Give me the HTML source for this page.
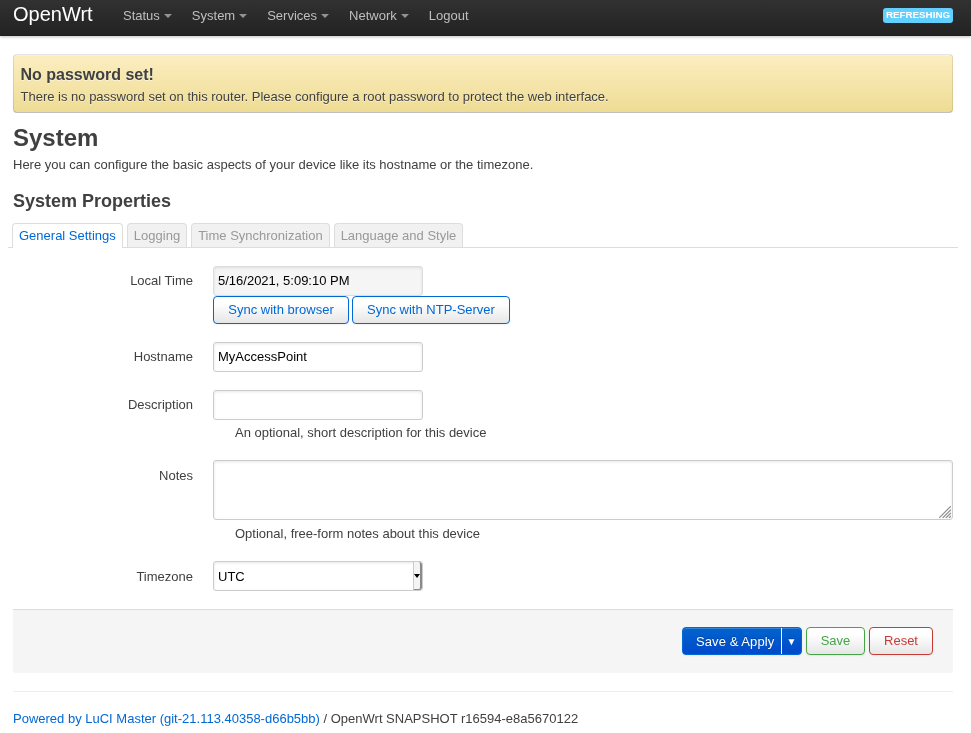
<!DOCTYPE html>
<html lang="en">
<head>
<meta charset="utf-8">
<title>OpenWrt - System - LuCI</title>
<style>
*{box-sizing:border-box}
html,body{margin:0;padding:0}
#wrap{position:absolute;left:0;top:0;width:971px;height:733px;overflow:hidden;will-change:transform}
body{width:971px;height:733px;overflow:hidden;background:#fff;font-family:"Liberation Sans",Arial,Helvetica,sans-serif;font-size:13px;line-height:18px;color:#404040;position:relative}
a{color:#0069d6;text-decoration:none}
header{position:absolute;left:0;top:-4px;width:971px;height:40px;background:#222;background-image:linear-gradient(#333,#222);box-shadow:0 1px 3px rgba(0,0,0,.25),inset 0 -1px 0 rgba(0,0,0,.1)}
header .brand{position:absolute;left:13px;top:8px;color:#fff;font-size:20px;line-height:20px;font-weight:normal}
ul.nav{list-style:none;margin:0;padding:0;position:absolute;left:113px;top:0;height:40px;display:flex}
ul.nav li a{display:block;padding:10px 10px 11px;line-height:19px;color:#bfbfbf;white-space:nowrap}
ul.nav li a.menu:after{content:"";display:inline-block;width:0;height:0;border-left:4px solid transparent;border-right:4px solid transparent;border-top:4px solid #bfbfbf;margin-left:4px;vertical-align:middle;position:relative;top:-1px;opacity:.7}
.badge{position:absolute;left:883px;top:12px;width:70px;height:15px;background:#62cffc;border-radius:3px;color:#fff;font-size:9.8px;font-weight:bold;line-height:13px;text-align:center;text-transform:uppercase;white-space:nowrap}
#main{position:absolute;left:13px;top:54px;width:940px}
.alert{height:59px;border:1px solid rgba(0,0,0,.1);border-bottom-color:rgba(0,0,0,.25);border-radius:4px;background:linear-gradient(#fceec1,#eedc94) repeat-x;background-origin:padding-box;box-shadow:inset 0 1px 0 rgba(255,255,255,.25);padding:10px 6.5px 0;text-shadow:0 1px 0 rgba(255,255,255,.5)}
.alert h4{margin:0;font-size:16px;line-height:20px;font-weight:bold;color:#404040}
.alert p{margin:3px 0 0;line-height:18px}
h2{margin:7px 0 0;font-size:24px;line-height:36px;font-weight:bold;color:#404040}
.desc{margin:0}
h3{margin:9px 0 0;font-size:18px;line-height:36px;font-weight:bold;color:#404040}
ul.tabs{list-style:none;margin:4px -5px 0;padding:0 0 0 4px;height:25px;border-bottom:1px solid #ddd;display:flex}
ul.tabs li{height:24px;margin-right:4px;padding:0 6px;border:1px solid #ddd;border-bottom:none;border-radius:4px 4px 0 0;background:#f1f1f1;line-height:23px;color:#999;white-space:nowrap}
ul.tabs li.active{background:#fff;color:#0069d6;height:25px}
.row{position:absolute;left:0;width:940px}
.row label{position:absolute;left:0;width:180px;text-align:right;line-height:18px}
.inp{position:absolute;left:200px;width:210px;height:30px;border:1px solid #ccc;border-radius:3px;background:#fff;box-shadow:inset 0 1px 3px rgba(0,0,0,.1);padding:5px 4px;font-size:13px;line-height:18px;color:#000;white-space:nowrap}
.inp.ro{background:#f5f5f5;border-color:#ddd}
.hint{position:absolute;left:222px;line-height:18px}
.btn{position:absolute;height:28px;border:1px solid #ccc;border-radius:4px;background:#fff;background-image:linear-gradient(#fff,#fff 25%,#e6e6e6);box-shadow:inset 0 1px 0 rgba(255,255,255,.2),0 1px 2px rgba(0,0,0,.05);font-size:13px;line-height:26px;text-align:center;white-space:nowrap;color:#404040}
.btn.act{border-color:#0069d6;color:#0069d6}
.btn.save{border-color:#46a546;color:#46a546}
.btn.reset{border-color:#c43c35;color:#c43c35}
.btn.apply{border-color:#0069d6;background:#0049cc;background-image:linear-gradient(#0064cd,#0049cc);color:#fff;text-shadow:0 -1px 0 rgba(0,0,0,.25)}
.actions{position:absolute;left:0;top:555px;width:940px;height:64px;background:#f5f5f5;border-top:1px solid #ddd;border-radius:0 0 3px 3px}
footer{position:absolute;left:0;top:637px;width:940px;border-top:1px solid #eee;padding-top:18px;line-height:18px}
</style>
</head>
<body><div id="wrap">
<header>
<a class="brand">OpenWrt</a>
<ul class="nav">
<li><a class="menu">Status</a></li>
<li><a class="menu">System</a></li>
<li><a class="menu">Services</a></li>
<li><a class="menu">Network</a></li>
<li><a>Logout</a></li>
</ul>
<span class="badge">REFRESHING</span>
</header>
<div id="main">
<div class="alert"><h4>No password set!</h4><p>There is no password set on this router. Please configure a root password to protect the web interface.</p></div>
<h2>System</h2>
<div class="desc">Here you can configure the basic aspects of your device like its hostname or the timezone.</div>
<h3>System Properties</h3>
<ul class="tabs">
<li class="active">General Settings</li>
<li>Logging</li>
<li>Time Synchronization</li>
<li>Language and Style</li>
</ul>

<div class="row" style="top:212px">
<label style="top:6px">Local Time</label>
<div class="inp ro" style="top:0">5/16/2021, 5:09:10 PM</div>
<div class="btn act" style="left:200px;top:30px;width:136px">Sync with browser</div>
<div class="btn act" style="left:339px;top:30px;width:158px">Sync with NTP-Server</div>
</div>
<div class="row" style="top:288px">
<label style="top:6px">Hostname</label>
<div class="inp" style="top:0">MyAccessPoint</div>
</div>
<div class="row" style="top:336px">
<label style="top:6px">Description</label>
<div class="inp" style="top:0"></div>
<div class="hint" style="top:34px">An optional, short description for this device</div>
</div>
<div class="row" style="top:406px">
<label style="top:7px">Notes</label>
<div class="inp" style="top:0;width:740px;height:60px"><svg width="12" height="12" viewBox="0 0 12 12" style="position:absolute;right:1px;bottom:1px"><path d="M0 12L12 0M3.6 12L12 3.6M6.8 12L12 6.8M10 12L12 10" stroke="#8e8e8e" stroke-width="1.2" fill="none"/></svg></div>
<div class="hint" style="top:65px">Optional, free-form notes about this device</div>
</div>
<div class="row" style="top:507px">
<label style="top:7px">Timezone</label>
<div class="inp" style="top:0;height:30px;padding-top:6px">UTC<span style="position:absolute;right:0;top:0;width:9px;height:28px;background:#f5f4f2;border-left:1px solid #ccc;border-right:2px solid #8a8a8a;border-bottom:1px solid #8a8a8a;border-radius:0 3px 3px 0"></span><span style="position:absolute;right:2px;top:12px;width:0;height:0;border-left:3px solid transparent;border-right:3px solid transparent;border-top:4px solid #000"></span></div>
</div>

<div class="actions">
<div class="btn apply" style="left:669px;top:17px;width:120px;text-align:left;padding-left:13px;line-height:28px;letter-spacing:.08px">Save &amp; Apply<i style="position:absolute;left:98px;top:0;width:1px;height:26px;background:#fff"></i><span style="position:absolute;left:98.5px;top:0;width:20px;text-align:center;font-size:10px;line-height:28px;letter-spacing:0">▼</span></div>
<div class="btn save" style="left:793px;top:17px;width:59px">Save</div>
<div class="btn reset" style="left:856px;top:17px;width:64px">Reset</div>
</div>
<footer><a>Powered by LuCI Master (git-21.113.40358-d66b5bb)</a> / OpenWrt SNAPSHOT r16594-e8a5670122</footer>
</div>
</div></body>
</html>
